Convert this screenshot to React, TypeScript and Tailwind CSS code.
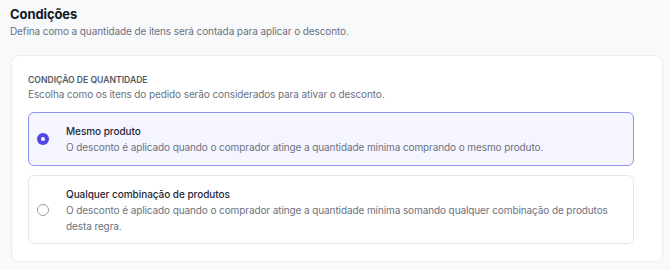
export default function App() {
  return (
    <div className="w-[670px] h-[270px] bg-[#f8f9fa] px-[10px] pt-[5px] font-['Inter','Noto_Sans',sans-serif] text-[#1f2937]">
      <h2 className="text-[13px] font-bold leading-[18px] tracking-[-0.1px] text-[#111827]">Condições</h2>
      <p className="text-[10px] leading-[16px] tracking-[-0.1px] text-[#6b7280]">Defina como a quantidade de itens será contada para aplicar o desconto.</p>
      <div className="mt-[16px] ml-[1px] w-[652px] rounded-[8px] border border-[#eaecef] bg-white pl-[16px] pr-[28px] pt-[18px] pb-[17px]">
        <div className="text-[8.6px] font-semibold leading-[12px] text-[#525a66] uppercase">Condição de quantidade</div>
        <p className="text-[10px] leading-[16px] tracking-[-0.1px] text-[#6b7280]">Escolha como os itens do pedido serão considerados para ativar o desconto.</p>
        <div className="mt-[10px] flex flex-col gap-[9px]">
          <label className="flex items-center rounded-[6px] border border-[#8e92f2] bg-[#f5f5ff] pl-[8px] pr-[16px] py-[10px]">
            <span className="flex h-[12px] w-[12px] shrink-0 items-center justify-center rounded-full bg-[#4f46e5]">
              <span className="h-[4px] w-[4px] rounded-full bg-white" />
            </span>
            <div className="ml-[17px]">
              <div className="text-[10px] font-medium leading-[16px] tracking-[-0.05px] text-[#1f2937]">Mesmo produto</div>
              <div className="text-[10px] leading-[16px] tracking-[-0.1px] text-[#6b7280]">O desconto é aplicado quando o comprador atinge a quantidade mínima comprando o mesmo produto.</div>
            </div>
          </label>
          <label className="flex items-center rounded-[6px] border border-[#e5e7eb] bg-white pl-[8px] pr-[16px] pt-[10px] pb-[9px]">
            <span className="h-[12px] w-[12px] shrink-0 rounded-full border-[1.5px] border-[#9ca3af] bg-white" />
            <div className="ml-[17px]">
              <div className="text-[10px] font-medium leading-[16px] tracking-[-0.05px] text-[#1f2937]">Qualquer combinação de produtos</div>
              <div className="text-[10px] leading-[16px] tracking-[-0.1px] text-[#6b7280]">O desconto é aplicado quando o comprador atinge a quantidade mínima somando qualquer combinação de produtos desta regra.</div>
            </div>
          </label>
        </div>
      </div>
    </div>
  );
}
